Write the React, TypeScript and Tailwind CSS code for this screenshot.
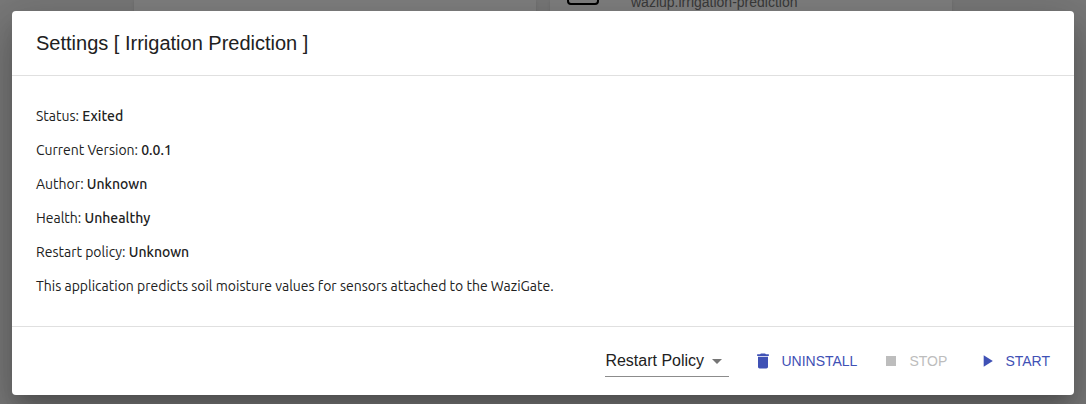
import type { ReactNode } from "react";

const details = [
  { label: "Status", value: "Exited" },
  { label: "Current Version", value: "0.0.1" },
  { label: "Author", value: "Unknown" },
  { label: "Health", value: "Unhealthy" },
  { label: "Restart policy", value: "Unknown" },
];

function ActionButton({ icon, children, disabled }: { icon: ReactNode; children: ReactNode; disabled?: boolean }) {
  return (
    <button
      type="button"
      disabled={disabled}
      className="flex h-9 min-w-[72px] items-center gap-2 text-sm uppercase text-[#3f51b5] disabled:text-[#bdbdbd]"
    >
      {icon}
      {children}
    </button>
  );
}

function AppsPage() {
  return (
    <div aria-hidden="true" className="absolute inset-0 overflow-hidden bg-[#f0f0f0]">
      <div className="mx-[134px] grid grid-cols-2 gap-[14px]">
        <div className="h-24 bg-white shadow" />
        <div className="flex h-24 gap-8 bg-white px-[17px] shadow">
          <div className="-mt-[27px] h-8 w-8 rounded border-2 border-black" />
          <p className="-mt-2 text-sm leading-5 text-[#757575]">waziup.irrigation-prediction</p>
        </div>
      </div>
    </div>
  );
}

export default function App() {
  return (
    <div className="relative flex min-h-screen flex-col font-['Liberation_Sans',Arial,sans-serif] text-[#212121]">
      <AppsPage />
      <div className="absolute inset-0 bg-black/50" />
      <div
        role="dialog"
        aria-labelledby="settings-title"
        className="relative mx-3 mt-[11px] mb-[9px] rounded bg-white shadow-[0_11px_15px_-7px_rgba(0,0,0,0.2),0_24px_38px_3px_rgba(0,0,0,0.14),0_9px_46px_8px_rgba(0,0,0,0.12)]"
      >
        <h2 id="settings-title" className="px-6 py-4 text-xl leading-8">
          Settings [ Irrigation Prediction ]
        </h2>
        <div className="flex flex-col gap-[14px] border-y border-[#e0e0e0] px-6 py-[30px] font-['Ubuntu','Noto_Sans',sans-serif] text-sm leading-5">
          {details.map(({ label, value }) => (
            <p key={label}>
              {label}: <b className="font-medium">{value}</b>
            </p>
          ))}
          <p>This application predicts soil moisture values for sensors attached to the WaziGate.</p>
        </div>
        <div className="flex items-center justify-end gap-6 px-6 py-4">
          <div className="relative w-[124px]">
            <select
              aria-label="Restart Policy"
              className="h-8 w-full appearance-none border-b border-[#8c8c8c] bg-transparent pr-6 text-base"
            >
              <option>Restart Policy</option>
              <option>Always</option>
              <option>On failure</option>
              <option>Unless stopped</option>
              <option>No</option>
            </select>
            <svg viewBox="0 0 24 24" className="pointer-events-none absolute top-1 right-0 h-6 w-6 fill-[#757575]">
              <path d="M7 10l5 5 5-5z" />
            </svg>
          </div>
          <ActionButton
            icon={
              <svg viewBox="0 0 24 24" className="h-5 w-5 fill-current">
                <path d="M6 19c0 1.100.9 2 2 2h8c1.100 0 2-.9 2-2V7H6v12zM19 4h-3.500l-1-1h-5l-1 1H5v2h14V4z" />
              </svg>
            }
          >
            Uninstall
          </ActionButton>
          <ActionButton
            disabled
            icon={
              <svg viewBox="0 0 24 24" className="h-5 w-5 fill-current">
                <path d="M6 6h12v12H6z" />
              </svg>
            }
          >
            Stop
          </ActionButton>
          <ActionButton
            icon={
              <svg viewBox="0 0 24 24" className="h-5 w-5 fill-current">
                <path d="M8 5v14l11-7z" />
              </svg>
            }
          >
            Start
          </ActionButton>
        </div>
      </div>
    </div>
  );
}
